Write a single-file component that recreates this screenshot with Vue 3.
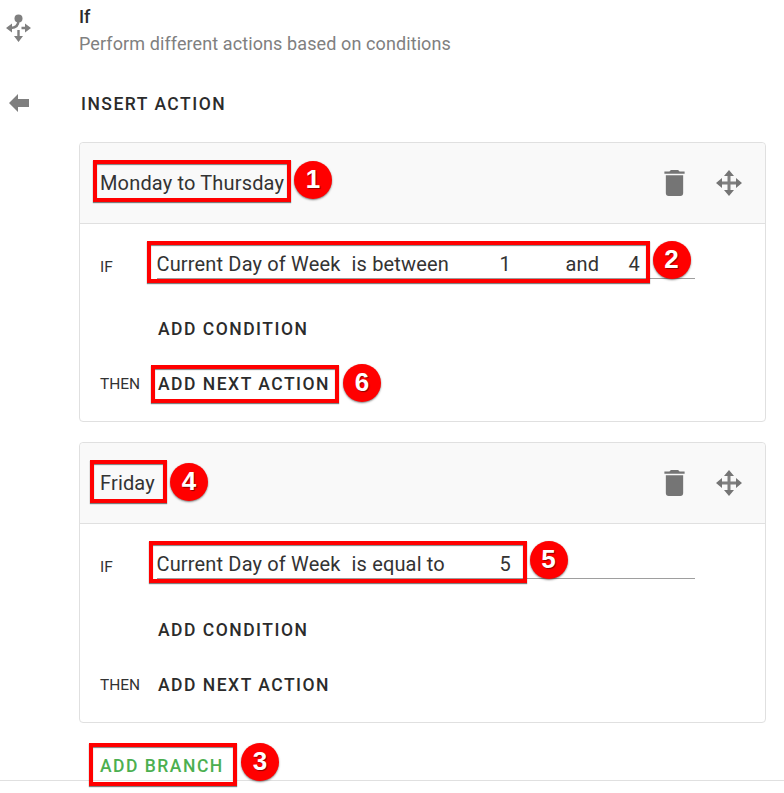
<template>
  <div class="page">
    <div class="row head">
      <div class="side">
        <svg class="flow-icon" viewBox="0 0 26 29" width="26" height="29">
          <circle cx="12.5" cy="4.5" r="4" />
          <path class="line" d="M12.5 6 C12.5 12 9 14 5 14 M15.5 14 H20 M12.5 16 V23" />
          <path d="M0 14 L6 9.5 V18.5 Z M25 14 L19 9.5 V18.5 Z M12.5 28 L8 22 H17 Z" />
        </svg>
      </div>
      <div class="head-text">
        <div class="title">If</div>
        <div class="subtitle">Perform different actions based on conditions</div>
      </div>
    </div>

    <div class="row insert">
      <div class="side">
        <svg class="back-icon" viewBox="0 0 20 18" width="20" height="18">
          <path d="M0 9 L9 0 V5 H20 V13 H9 V18 Z" />
        </svg>
      </div>
      <span class="btn-text">INSERT ACTION</span>
    </div>

    <div class="cards">
      <section v-for="b in branches" :key="b.name" class="card">
        <header class="card-head">
          <span class="mark name">
            {{ b.name }}
            <i class="box" :class="b.nameBox"></i>
            <b class="badge" :style="{ left: b.nameBadge + 'px', top: b.nameBadgeTop + 'px' }">{{ b.nameNum }}</b>
          </span>
          <div class="tools">
            <svg class="trash" viewBox="5 3 14 18" width="21" height="26">
              <path d="M19 4H15.5L14.5 3H9.5L8.5 4H5V5.6H19M6 19A2 2 0 0 0 8 21H16A2 2 0 0 0 18 19V6.6H6V19Z" />
            </svg>
            <svg class="move" viewBox="0 0 26 26" width="26" height="26">
              <path class="line thick" d="M13 3V23M3 13H23" />
              <path d="M13 0L18 6H8ZM13 26L8 20H18ZM0 13L6 8V18ZM26 13L20 18V8Z" />
            </svg>
          </div>
        </header>
        <div class="card-body">
          <div class="cond">
            <span class="label if-label">IF</span>
            <div class="field">
              <span class="mark expr">
                <span v-for="(p, i) in b.parts" :key="i" :style="{ width: p.w + 'px' }" class="part">{{ p.t }}</span>
                <i class="box" :class="b.exprBox"></i>
                <b class="badge" :style="{ left: b.exprBadge + 'px' }">{{ b.exprNum }}</b>
              </span>
            </div>
          </div>
          <div class="add-cond btn-text">ADD CONDITION</div>
          <div class="then">
            <span class="label">THEN</span>
            <span class="mark btn-text next">
              ADD NEXT ACTION
              <template v-if="b.nextNum">
                <i class="box next-box"></i>
                <b class="badge next-badge">{{ b.nextNum }}</b>
              </template>
            </span>
          </div>
        </div>
      </section>
    </div>

    <div class="foot">
      <span class="mark btn-text green">
        ADD BRANCH
        <i class="box branch-box"></i>
        <b class="badge branch-badge">3</b>
      </span>
    </div>
  </div>
</template>

<script setup>
const branches = [
  {
    name: "Monday to Thursday",
    nameNum: 1,
    nameBox: "name-box-1",
    nameBadge: 194,
    nameBadgeTop: -10,
    parts: [
      { t: "Current Day of Week", w: 195 },
      { t: "is between", w: 148 },
      { t: "1", w: 66 },
      { t: "and", w: 63 },
      { t: "4", w: 30 },
    ],
    exprNum: 2,
    exprBox: "expr-box-2",
    exprBadge: 496,
    nextNum: 6,
  },
  {
    name: "Friday",
    nameNum: 4,
    nameBox: "name-box-4",
    nameBadge: 70,
    nameBadgeTop: -8,
    parts: [
      { t: "Current Day of Week", w: 195 },
      { t: "is equal to", w: 148 },
      { t: "5", w: 20 },
    ],
    exprNum: 5,
    exprBox: "expr-box-5",
    exprBadge: 373,
  },
];
</script>

<style>
html,
body {
  margin: 0;
  background: #fff;
}
</style>

<style scoped>
.page {
  width: 784px;
  height: 793px;
  overflow: hidden;
  position: relative;
  font-family: Roboto, sans-serif;
  color: #333;
  font-size: 16px;
}
.row {
  display: flex;
}
.side {
  width: 79px;
  flex: none;
}
.head {
  height: 82px;
  padding-top: 6px;
  box-sizing: border-box;
}
.flow-icon {
  display: block;
  margin: 8px 0 0 6px;
  fill: #7f7f7f;
}
.line {
  fill: none;
  stroke: #7f7f7f;
  stroke-width: 2.4;
}
.thick {
  stroke-width: 3;
}
.title {
  font-size: 18px;
  font-weight: 500;
  line-height: 22px;
  color: #2b2b2b;
}
.subtitle {
  font-size: 18px;
  color: #808080;
  line-height: 24px;
  margin-top: 4px;
  letter-spacing: 0.1px;
}
.insert {
  height: 60px;
  align-items: flex-start;
}
.back-icon {
  display: block;
  margin: 12px 0 0 9px;
  fill: #7f7f7f;
}
.btn-text {
  font-size: 17.5px;
  font-weight: 500;
  letter-spacing: 1.5px;
  line-height: 20px;
  color: #2b2b2b;
}
.insert .btn-text {
  margin: 12px 0 0 2px;
}
.cards {
  margin-left: 79px;
  width: 687px;
  display: flex;
  flex-direction: column;
  gap: 20px;
}
.card {
  border: 1px solid #e0e0e0;
  border-radius: 4px;
  height: 280px;
  box-sizing: border-box;
}
.card + .card {
  height: 281px;
}
.card-head {
  height: 80px;
  background: #f9f9f9;
  border-bottom: 1px solid #e0e0e0;
  border-radius: 4px 4px 0 0;
  display: flex;
  align-items: center;
  justify-content: space-between;
  padding: 0 23px 0 20px;
}
.mark {
  position: relative;
  display: inline-block;
}
.name {
  line-height: 24px;
  font-size: 20px;
  letter-spacing: 0.16px;
  margin-top: -1px;
}
.box {
  position: absolute;
  box-sizing: border-box;
  border: 4px solid #f00;
  box-shadow: 0 1px 1px rgba(0, 0, 0, 0.5), inset 0 1px 1px rgba(0, 0, 0, 0.5);
}
.name-box-1 {
  left: -7px;
  top: -11px;
  width: 198px;
  height: 42px;
}
.name-box-4 {
  left: -10px;
  top: -11px;
  width: 77px;
  height: 43px;
}
.badge {
  position: absolute;
  top: -8px;
  width: 38px;
  height: 38px;
  border-radius: 50%;
  background: #f00;
  box-shadow: 0 1px 2px rgba(0, 0, 0, 0.5);
  color: #fff;
  font-family: "Liberation Sans", Arial, sans-serif;
  font-size: 26px;
  font-weight: 700;
  line-height: 37px;
  letter-spacing: 0;
  text-align: center;
  text-shadow: 1px 1px 1px rgba(0, 0, 0, 0.45);
}
.tools {
  display: flex;
  align-items: center;
  gap: 31px;
}
.trash,
.move {
  fill: #757575;
  display: block;
}
.card-body {
  padding: 0 0 0 20px;
}
.cond {
  display: flex;
  align-items: flex-start;
  height: 55px;
  padding-top: 17px;
}
.label {
  font-size: 15.5px;
  color: #333;
  width: 58px;
  flex: none;
  line-height: 20px;
}
.if-label {
  margin-top: 16px;
  width: 57px;
}
.field {
  width: 538px;
  height: 38px;
  border-bottom: 1px solid #9e9e9e;
  box-sizing: border-box;
}
.expr {
  display: flex;
  line-height: 24px;
  font-size: 20px;
  letter-spacing: 0.16px;
  padding-top: 11px;
  margin-left: -0.5px;
}
.part {
  display: inline-block;
  white-space: nowrap;
}
.expr-box-2 {
  left: -10px;
  top: 0;
  width: 503px;
  height: 42px;
}
.expr-box-5 {
  left: -8px;
  top: 0;
  width: 378px;
  height: 42px;
}
.expr .badge {
  top: 0;
}
.add-cond {
  margin: 24px 0 0 58px;
}
.card:first-child .add-cond {
  margin-top: 23px;
}
.then {
  display: flex;
  align-items: center;
  margin-top: 35px;
}
.next-box {
  left: -7px;
  top: -9px;
  width: 188px;
  height: 38px;
}
.next-badge {
  left: 185px;
  top: -10px;
}
.foot {
  position: absolute;
  left: 0;
  right: 0;
  top: 723px;
  height: 58px;
  box-sizing: border-box;
  border-bottom: 1px solid #e0e0e0;
  padding: 33px 0 0 100px;
}
.green {
  color: #4caf50;
}
.branch-box {
  left: -11px;
  top: -13px;
  width: 148px;
  height: 43px;
}
.branch-badge {
  left: 141px;
  top: -13px;
}
</style>
